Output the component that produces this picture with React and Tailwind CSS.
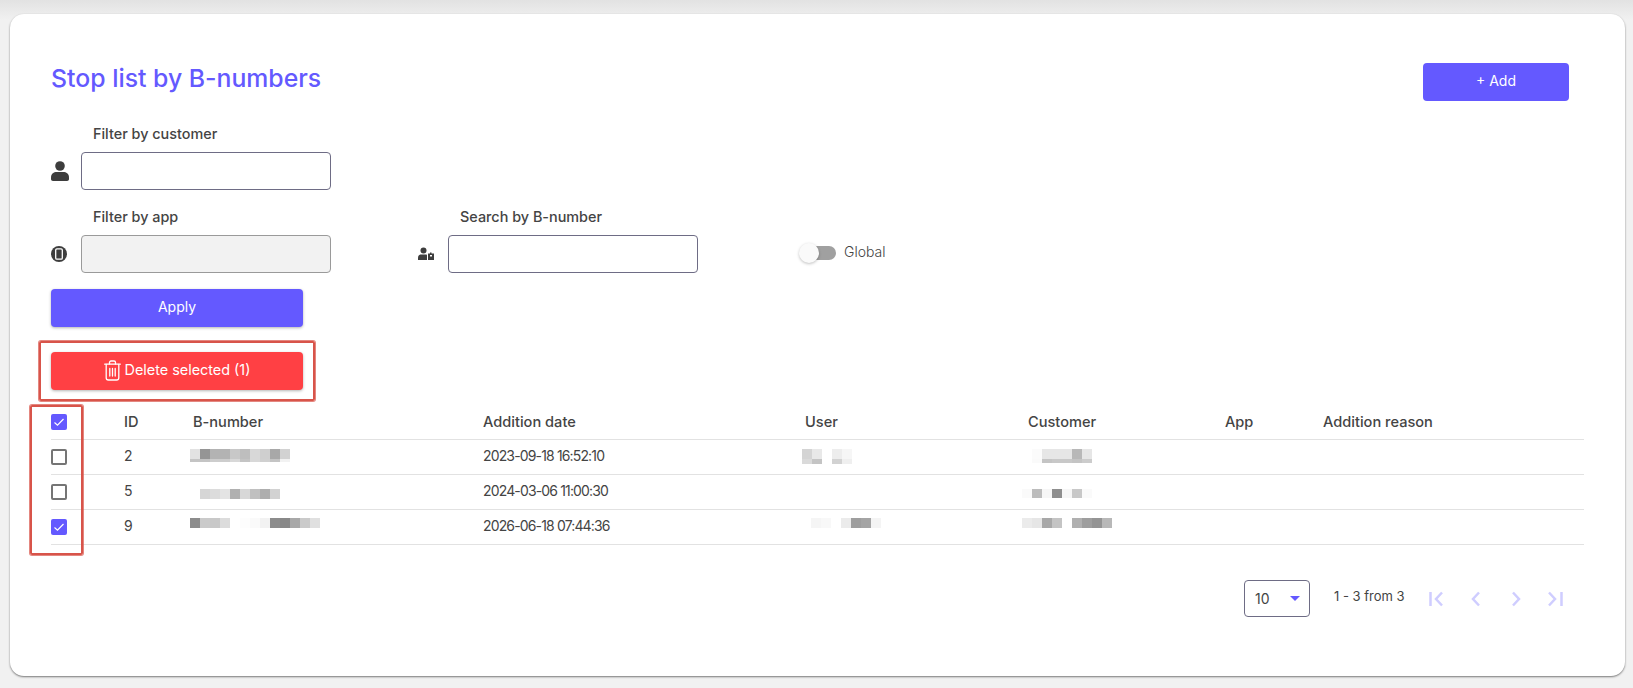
const rows = [
  {
    id: 2,
    date: "2023-09-18 16:52:10",
    checked: false,
    number: {
      className: "mt-[9px] ml-[-3px]",
      lines: [
        ["h-[10px]", ["#e2e2e2", "#959595", "#b3b3b3", "#b3b3b3", "#c8c8c8", "#bebebe", "#d8d8d8", "#cfcfcf", "#a8a8a8", "#d2d2d2"]],
        ["h-[3px]", ["#c4c4c4", "#c4c4c4", "#cdcdcd", "#cdcdcd", "#d8d8d8", "#c4c4c4", "#d8d8d8", "#d0d0d0", "#c4c4c4", "#f2f2f2"]],
      ],
    },
    user: {
      className: "mt-[9px] ml-[-3px]",
      lines: [
        ["h-[10px]", ["#d4d4d4", "#e8e8e8", "#ffffff", "#ededed", "#f6f6f6"]],
        ["h-[5px]", ["#dadada", "#c4c4c4", "#ffffff", "#d2d2d2", "#efefef"]],
      ],
    },
    customer: {
      className: "mt-[9px] ml-[-6px]",
      lines: [
        ["h-[10px]", ["#ffffff", "#fbfbfb", "#e6e6e6", "#e6e6e6", "#e6e6e6", "#b8b8b8", "#e6e6e6"]],
        ["h-[4px]", ["#ffffff", "#fafafa", "#c4c4c4", "#c8c8c8", "#c8c8c8", "#c4c4c4", "#cccccc"]],
      ],
    },
  },
  {
    id: 5,
    date: "2024-03-06 11:00:30",
    checked: false,
    number: {
      className: "mt-[14px] ml-[7px]",
      lines: [["h-[10px]", ["#d6d6d6", "#dcdcdc", "#e4e4e4", "#b0b0b0", "#d8d8d8", "#c0c0c0", "#aeaeae", "#d2d2d2"]]],
    },
    customer: {
      className: "mt-[14px] ml-[-6px]",
      lines: [["h-[9px]", ["#fafafa", "#bcbcbc", "#f6f6f6", "#8e8e8e", "#f6f6f6", "#c8c8c8", "#fafafa"]]],
    },
  },
  {
    id: 9,
    date: "2026-06-18 07:44:36",
    checked: true,
    number: {
      className: "mt-[8px] ml-[-3px]",
      lines: [["h-[10px]", ["#8c8c8c", "#cacaca", "#c8c8c8", "#dcdcdc", "#ffffff", "#fdfdfd", "#fafafa", "#f2f2f2", "#8c8c8c", "#888888", "#a8a8a8", "#cacaca", "#e0e0e0"]]],
    },
    user: {
      className: "mt-[8px] ml-[6px]",
      lines: [["h-[10px]", ["#f5f5f5", "#f8f8f8", "#ffffff", "#ebebeb", "#9e9e9e", "#a4a4a4", "#f4f4f4"]]],
    },
    customer: {
      className: "mt-[8px] ml-[-6px]",
      lines: [["h-[10px]", ["#ebebeb", "#e6e6e6", "#a8a8a8", "#c4c4c4", "#ffffff", "#b0b0b0", "#9e9e9e", "#949494", "#b8b8b8"]]],
    },
  },
];

const gridCols = "grid grid-cols-[73px_69px_290px_322px_223px_197px_98px_1fr]";

// pixelated blocks that hide the real values
function Blur({ data }) {
  if (!data) return <div />;
  return (
    <div className={`self-start ${data.className}`}>
      {data.lines.map(([height, colors], i) => (
        <div key={i} className={`flex ${height}`}>
          {colors.map((color, j) => (
            <div key={j} className="w-[10px] h-full" style={{ backgroundColor: color }} />
          ))}
        </div>
      ))}
    </div>
  );
}

function Checkbox({ checked }) {
  if (checked) {
    return (
      <div className="w-4 h-4 rounded-[2px] bg-[#6459ff] flex items-center justify-center">
        <svg width="12" height="12" viewBox="0 0 12 12" fill="none" stroke="white" strokeWidth="1.2">
          <path d="M1.5 6.5 L4.5 9.2 L10.5 3" />
        </svg>
      </div>
    );
  }
  return <div className="w-4 h-4 rounded-[2px] border-2 border-[#757575]" />;
}

function PersonIcon() {
  return (
    <svg width="18" height="20" viewBox="0 0 18 20" fill="#3d3d3d">
      <circle cx="9" cy="5" r="4.8" />
      <path d="M0 16.5 C0 12.5 3 11 5.5 11 H12.5 C15 11 18 12.5 18 16.5 V18 C18 19.2 17.2 20 16 20 H2 C0.8 20 0 19.2 0 18 Z" />
    </svg>
  );
}

function AppIcon() {
  return (
    <svg width="16" height="16" viewBox="0 0 16 16">
      <circle cx="8" cy="8" r="8" fill="#3d3d3d" />
      <rect x="4.7" y="2.8" width="6.6" height="10.4" rx="1.2" fill="none" stroke="white" strokeWidth="1.3" />
    </svg>
  );
}

function CustomerBoxIcon() {
  return (
    <svg width="16" height="14" viewBox="0 0 16 14" fill="#3d3d3d">
      <circle cx="5.5" cy="3.5" r="3" />
      <path d="M0 13 V10.5 C0 8.5 1.5 7.5 3 7.5 H8 C8.8 7.5 9 8 9 8.5 V13 Z" />
      <path d="M10 6.5 H12 V5.5 H13.5 V6.5 H16 V13 H10 Z M12 8 V9.5 H14 V8 Z" fillRule="evenodd" />
    </svg>
  );
}

function TrashIcon() {
  return (
    <svg width="17" height="21" viewBox="0 0 17 21" fill="none" stroke="white" strokeWidth="1.3" strokeLinecap="round">
      <path d="M0.7 4.2 H16.3" />
      <path d="M5.5 4 V2.6 C5.5 1.6 6.2 1 7 1 H10 C10.8 1 11.5 1.6 11.5 2.6 V4" />
      <path d="M2.2 4.5 V17.8 C2.2 19.2 3 20 4.4 20 H12.6 C14 20 14.8 19.2 14.8 17.8 V4.5" />
      <path d="M5.8 8.5 V16 M8.5 8.5 V16 M11.2 8.5 V16" />
    </svg>
  );
}

function PageIcon({ d }) {
  return (
    <svg width="22" height="22" viewBox="0 0 22 22" fill="none" stroke="#cfcdff" strokeWidth="2.5">
      <path d={d} />
    </svg>
  );
}

function Field({ label, Icon, disabled }) {
  return (
    <div>
      <div className="ml-[42px] mb-2 h-5 text-[14.4px] font-medium leading-5 text-[#444]">{label}</div>
      <div className="flex items-center">
        <div className="w-[30px] h-5 flex items-center">
          <Icon />
        </div>
        <div
          className={`w-[250px] h-[38px] rounded-[4px] border ${
            disabled ? "bg-[#f2f2f2] border-[#9a9a9a]" : "bg-white border-[#6e6c85]"
          }`}
        />
      </div>
    </div>
  );
}

export default function App() {
  return (
    <div className="relative min-h-[688px] bg-[#f1f1f1] bg-gradient-to-b from-[#e2e2e2] to-[#f1f1f1] bg-[length:100%_20px] bg-no-repeat pt-[14px] px-[10px] font-['Inter',sans-serif] text-[#444] overflow-hidden">
      <div className="relative w-[1615px] h-[662px] rounded-[14px] bg-white pt-[49px] pl-[41px] pr-[41px] shadow-[0_1px_2px_rgba(0,0,0,0.5)]">
        <div className="flex justify-between items-center mb-[23px]">
          <h1 className="text-[24.8px] font-medium text-[#6459ff] -mt-[6px]">Stop list by B-numbers</h1>
          <button className="w-[146px] h-[38px] mr-[15px] pb-[2px] rounded-[4px] bg-[#6459ff] text-white text-sm">+ Add</button>
        </div>

        <Field label="Filter by customer" Icon={PersonIcon} />

        <div className="flex mt-[17px]">
          <Field label="Filter by app" Icon={AppIcon} disabled />
          <div className="ml-[87px]">
            <Field label="Search by B-number" Icon={CustomerBoxIcon} />
          </div>
          <div className="ml-[101px] mt-[36px] h-5 flex items-center">
            <div className="relative w-[37px] h-5 flex items-center">
              <div className="ml-[2px] w-[35px] h-[14px] rounded-full bg-[#a0a0a0]" />
              <div className="absolute left-0 top-0 w-5 h-5 rounded-full bg-[#fafafa] shadow-[0_1px_3px_rgba(0,0,0,0.25)]" />
            </div>
            <span className="ml-2 pb-[2px] text-sm font-light text-[#444]">Global</span>
          </div>
        </div>

        <button className="block mt-4 w-[252px] h-[38px] pb-[2px] rounded-[4px] bg-[#6459ff] text-white text-sm shadow-[0_1px_3px_rgba(0,0,0,0.3)]">
          Apply
        </button>

        <div className="relative mt-[25px] w-[252px]">
          <button className="flex items-center justify-center gap-1 w-[252px] h-[38px] pb-[2px] rounded-[4px] bg-[#ff4044] text-white text-[14.4px] shadow-[0_1px_3px_rgba(0,0,0,0.3)]">
            <TrashIcon />
            Delete selected (1)
          </button>
          <div className="absolute -left-[12px] -top-[11px] -right-[12px] -bottom-[11px] rounded-[2px] border-2 border-[#d8544a] shadow-[0_0_0_1px_rgba(216,84,74,0.7)]" />
        </div>

        <div className="relative mt-[15px] text-sm">
          <div className={`${gridCols} h-[35px] items-center border-b border-[#e2e2e2] text-[14.6px] font-medium`}>
            <Checkbox checked />
            <div>ID</div>
            <div>B-number</div>
            <div>Addition date</div>
            <div>User</div>
            <div>Customer</div>
            <div>App</div>
            <div>Addition reason</div>
          </div>
          {rows.map((row) => (
            <div key={row.id} className={`${gridCols} h-[35px] items-center border-b border-[#e2e2e2] text-sm`}>
              <Checkbox checked={row.checked} />
              <div className="pb-[2px]">{row.id}</div>
              <Blur data={row.number} />
              <div className="pb-[2px] tracking-[-0.85px]">{row.date}</div>
              <Blur data={row.user} />
              <Blur data={row.customer} />
              <div />
              <div />
            </div>
          ))}
          <div className="absolute -left-[21px] top-0 w-[53px] h-[150px] rounded-[2px] border-2 border-[#d8544a] shadow-[0_0_0_1px_rgba(216,84,74,0.7)]" />
        </div>

        <div className="flex items-center justify-end mt-[35px] pr-[17px] text-[13px]">
          <div className="flex items-center justify-between w-[66px] h-[37px] pl-[10px] pr-[9px] rounded-[4px] border border-[#6e6c85] text-sm">
            <span>10</span>
            <span className="w-0 h-0 border-x-[5px] border-x-transparent border-t-[5px] border-t-[#6459ff]" />
          </div>
          <span className="ml-6 w-[91px] -mt-[3px]">1 - 3 from 3</span>
          <div className="flex items-center gap-[18px]">
            <PageIcon d="M5.5 4 V18 M17 4.5 L11 11 L17 17.5" />
            <PageIcon d="M14 4.5 L8 11 L14 17.5" />
            <PageIcon d="M8 4.5 L14 11 L8 17.5" />
            <PageIcon d="M4 4.5 L10 11 L4 17.5 M16.5 4 V18" />
          </div>
        </div>
      </div>
    </div>
  );
}
